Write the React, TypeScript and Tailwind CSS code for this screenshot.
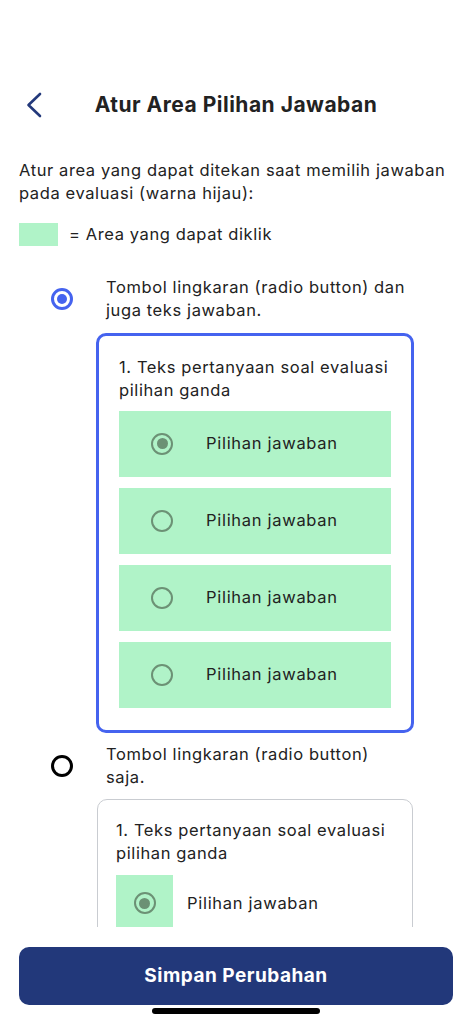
import React from "react";

const font = { fontFamily: "Inter, 'Noto Sans', sans-serif" };

function BigRadio({ selected }: { selected: boolean }) {
  return selected ? (
    <div className="w-[22px] h-[22px] rounded-full border-[3px] border-[#4563ef] flex items-center justify-center shrink-0">
      <div className="w-[10px] h-[10px] rounded-full bg-[#4563ef]" />
    </div>
  ) : (
    <div className="w-[22px] h-[22px] rounded-full border-[3px] border-black shrink-0" />
  );
}

function SmallRadio({ selected }: { selected: boolean }) {
  return (
    <div className="w-[22px] h-[22px] rounded-full border-[2.5px] border-[#6c9175] flex items-center justify-center shrink-0">
      {selected && <div className="w-[11px] h-[11px] rounded-full bg-[#6c9175]" />}
    </div>
  );
}

function GreenOption({ selected }: { selected: boolean }) {
  return (
    <div className="h-[66px] bg-[#b0f3c8] flex items-center pl-[32px]">
      <SmallRadio selected={selected} />
      <span className="ml-[33px] text-[16.5px] tracking-[0.7px] text-[#222]">Pilihan jawaban</span>
    </div>
  );
}

export default function App() {
  return (
    <div className="w-[472px] h-[1024px] bg-white flex flex-col text-[#222]" style={font}>
      <div className="h-[927px] overflow-hidden shrink-0">
        <div className="mt-[80px] h-[50px] grid grid-cols-[1fr_auto_1fr] items-center">
          <div className="pl-[26px] flex items-center">
            <svg width="16" height="26" viewBox="0 0 16 26" fill="none">
              <path d="M14 2 L2.5 13 L14 24" stroke="#23397b" strokeWidth="2.6" strokeLinecap="round" strokeLinejoin="round" />
            </svg>
          </div>
          <div className="text-[21px] font-bold text-[#222] tracking-[0.5px]">Atur Area Pilihan Jawaban</div>
          <div />
        </div>

        <p className="mt-[29px] px-[19px] text-[16.5px] leading-[23px] tracking-[0.6px]">
          Atur area yang dapat ditekan saat memilih jawaban
          <br />
          pada evaluasi (warna hijau):
        </p>

        <div className="mt-[17px] px-[19px] flex items-center">
          <div className="w-[39px] h-[23px] bg-[#b0f3c8]" />
          <span className="ml-[11px] text-[16.5px] tracking-[0.6px]">= Area yang dapat diklik</span>
        </div>

        <div className="mt-[29px] flex items-center pl-[51px]">
          <BigRadio selected />
          <p className="ml-[33px] text-[16.5px] leading-[23px] tracking-[0.6px]">
            Tombol lingkaran (radio button) dan
            <br />
            juga teks jawaban.
          </p>
        </div>

        <div className="mt-[11px] ml-[96px] w-[318px] border-[3px] border-[#4563ef] rounded-[10px] px-[20px] pt-[20px] pb-[22px]">
          <p className="text-[16.5px] leading-[23px] tracking-[0.6px]">
            1. Teks pertanyaan soal evaluasi
            <br />
            pilihan ganda
          </p>
          <div className="mt-[9px] flex flex-col gap-[11px]">
            <GreenOption selected />
            <GreenOption selected={false} />
            <GreenOption selected={false} />
            <GreenOption selected={false} />
          </div>
        </div>

        <div className="mt-[10px] flex items-center pl-[51px]">
          <BigRadio selected={false} />
          <p className="ml-[33px] text-[16.5px] leading-[23px] tracking-[0.6px]">
            Tombol lingkaran (radio button)
            <br />
            saja.
          </p>
        </div>

        <div className="mt-[10px] ml-[97px] w-[316px] border-[1.5px] border-[#c9ccd1] rounded-[10px] pl-[18px] pr-[18px] pt-[19px] pb-[20px]">
          <p className="text-[16.5px] leading-[23px] tracking-[0.6px]">
            1. Teks pertanyaan soal evaluasi
            <br />
            pilihan ganda
          </p>
          <div className="mt-[10px] flex items-center">
            <div className="w-[57px] h-[57px] bg-[#b0f3c8] flex items-center justify-center">
              <SmallRadio selected />
            </div>
            <span className="ml-[14px] text-[16.5px] tracking-[0.7px]">Pilihan jawaban</span>
          </div>
        </div>
      </div>

      <div className="pt-[20px] px-[19px]">
        <button className="w-full h-[58px] rounded-[10px] bg-[#22387a] text-white text-[19px] font-bold tracking-[0.5px]">
          Simpan Perubahan
        </button>
      </div>
      <div className="mt-[3px] flex justify-center">
        <div className="w-[168px] h-[6px] rounded-full bg-black" />
      </div>
    </div>
  );
}
